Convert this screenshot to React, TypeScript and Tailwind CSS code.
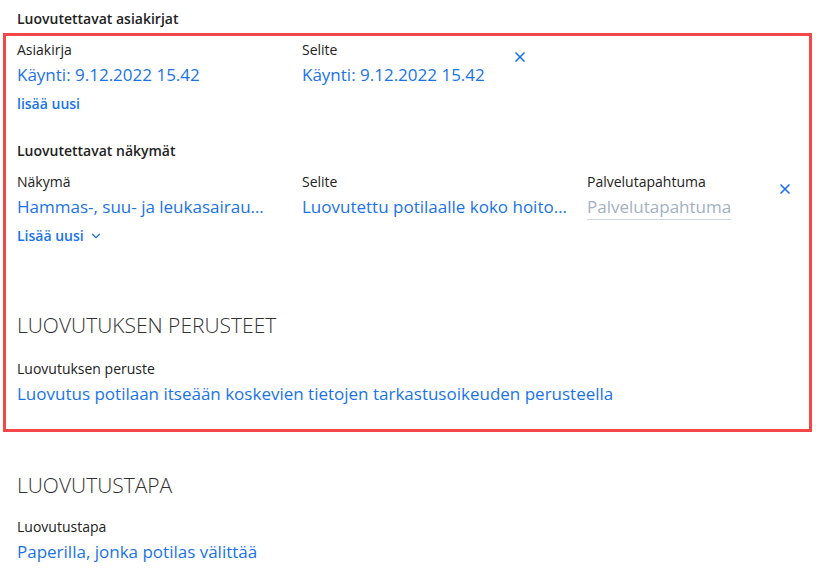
import React from 'react';
import { X, ChevronDown } from 'lucide-react';

const font = { fontFamily: '"Open Sans", "Noto Sans", sans-serif' };

const Field: React.FC<{
  label: string;
  value: string;
  className?: string;
  valueClass?: string;
  placeholder?: boolean;
}> = ({ label, value, className = '', valueClass = '', placeholder = false }) => (
  <div className={`flex flex-col ${className}`}>
    <span className="text-[14px] leading-[20px] text-[#222]">{label}</span>
    {placeholder ? (
      <span className="mt-[3px] self-start border-b border-[#cfd6df] text-[17px] leading-[24px] text-[#a3b1c4]">
        {value}
      </span>
    ) : (
      <span className={`mt-[3px] truncate text-[17px] leading-[24px] text-[#1a73e8] ${valueClass}`}>{value}</span>
    )}
  </div>
);

export default function App() {
  return (
    <div className="min-h-screen bg-white text-[#222]" style={font}>
      <div className="px-[17px] pt-[8px] pb-[4px] text-[14px] font-semibold">Luovutettavat asiakirjat</div>

      {/* Highlighted block */}
      <div className="ml-[3px] mr-[13px] border-[3px] border-[#f44848] px-[11px] pt-[4px] pb-[23px]">
        <div className="flex items-start">
          <Field label="Asiakirja" value="Käynti: 9.12.2022 15.42" className="w-[285px]" />
          <Field label="Selite" value="Käynti: 9.12.2022 15.42" className="w-[210px]" />
          <X className="mt-[9px] h-[16px] w-[16px] text-[#1a73e8]" strokeWidth={2.5} />
        </div>
        <button className="mt-[6px] text-[14px] font-semibold text-[#1a73e8]">lisää uusi</button>

        <div className="mt-[25px] text-[14px] font-semibold">Luovutettavat näkymät</div>
        <div className="mt-[11px] flex items-start">
          <Field
            label="Näkymä"
            value="Hammas-, suu- ja leukasairaudet"
            className="w-[285px]"
            valueClass="max-w-[250px]"
          />
          <Field
            label="Selite"
            value="Luovutettu potilaalle koko hoitojakso"
            className="w-[285px]"
            valueClass="max-w-[268px]"
          />
          <Field label="Palvelutapahtuma" value="Palvelutapahtuma" placeholder className="w-[190px]" />
          <X className="mt-[9px] h-[16px] w-[16px] text-[#1a73e8]" strokeWidth={2.5} />
        </div>
        <button className="mt-[5px] flex items-center gap-[5px] text-[14px] font-semibold text-[#1a73e8]">
          Lisää uusi
          <ChevronDown className="h-[14px] w-[14px]" strokeWidth={2} />
        </button>

        <h2 className="mt-[64px] text-[21px] font-light text-[#333]">LUOVUTUKSEN PERUSTEET</h2>
        <div className="mt-[17px]">
          <Field
            label="Luovutuksen peruste"
            value="Luovutus potilaan itseään koskevien tietojen tarkastusoikeuden perusteella"
          />
        </div>
      </div>

      <div className="px-[17px] pt-[38px]">
        <h2 className="text-[21px] font-light text-[#333]">LUOVUTUSTAPA</h2>
        <div className="mt-[16px]">
          <Field label="Luovutustapa" value="Paperilla, jonka potilas välittää" />
        </div>
      </div>
    </div>
  );
}
